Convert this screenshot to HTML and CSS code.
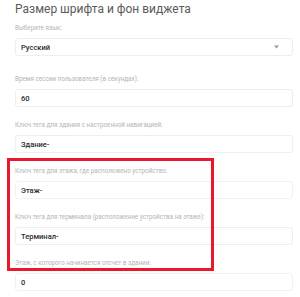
FILE: index.html
```html
<!DOCTYPE html>
<html lang="ru">

<head>
    <meta charset="UTF-8">
    <meta name="viewport" content="width=device-width, initial-scale=1.0">
    <title>Настройки виджета</title>
    <link rel="stylesheet" href="styles.css">
</head>

<body>
    <div class="settings">
        <h2 class="settings__title">Размер шрифта и фон виджета</h2>

        <div class="field field--select">
            <label class="field__label">Выберите язык:</label>
            <div class="field__input">
                <span>Русский</span>
                <svg class="field__arrow" width="5" height="4" viewBox="0 0 5 4">
                    <path d="M0 0.5 L5 0.5 L2.5 3.5 Z" fill="#9a9a9a" />
                </svg>
            </div>
        </div>

        <div class="field">
            <label class="field__label">Время сессии пользователя (в секундах):</label>
            <div class="field__input">60</div>
        </div>

        <div class="field">
            <label class="field__label">Ключ тега для здания с настроенной навигацией:</label>
            <div class="field__input">Здание-</div>
        </div>

        <div class="field">
            <label class="field__label">Ключ тега для этажа, где расположено устройство:</label>
            <div class="field__input field__input--light">Этаж-</div>
        </div>

        <div class="field">
            <label class="field__label">Ключ тега для терминала (расположение устройства на этаже):</label>
            <div class="field__input">Терминал-</div>
        </div>

        <div class="field">
            <label class="field__label">Этаж, с которого начинается отсчет в здании:</label>
            <div class="field__input field__input--light">0</div>
        </div>

        <div class="highlight"></div>
    </div>
</body>

</html>
```

FILE: styles.css
```css
* {
    margin: 0;
    padding: 0;
    box-sizing: border-box;
}

body {
    background: #fff;
    font-family: Roboto, "Noto Sans", sans-serif;
}

.settings {
    position: relative;
    padding: 1px 7px 0 15px;
}

.settings__title {
    height: 16px;
    line-height: 16px;
    margin-bottom: 6px;
    font-size: 12px;
    font-weight: 400;
    color: #5a5a5a;
}

.field {
    margin-bottom: 13px;
}

.field--select {
    margin-bottom: 18px;
}

.field__label {
    display: block;
    height: 10px;
    line-height: 10px;
    margin-bottom: 5px;
    font-size: 6.3px;
    color: #b4b4b4;
}

.field__input {
    display: flex;
    align-items: center;
    justify-content: space-between;
    height: 18px;
    padding: 0 13px 0 5px;
    border: 1px solid #eeeeee;
    border-radius: 3px;
    font-size: 7.5px;
    font-weight: 500;
    color: #2a2a2a;
}

.field__input--light {
    border-color: #f2f2f2;
}

.highlight {
    position: absolute;
    top: 158px;
    left: 7px;
    width: 207px;
    height: 113px;
    border: 3px solid #e8192c;
}
```
